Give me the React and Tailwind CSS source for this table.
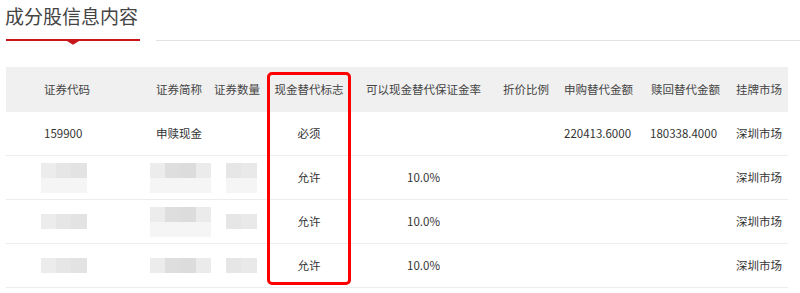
const FONT = { fontFamily: '"Microsoft YaHei", "Noto Sans CJK SC", "Noto Sans", sans-serif' };

const COLS = "grid grid-cols-[144px_58px_60px_82px_147px_61px_87px_85px_58px]";

const HEAD = [
  ["证券代码", "pl-[38px]"],
  ["证券简称", "pl-[6px]"],
  ["证券数量", "pl-[6px]"],
  ["现金替代标志", "justify-center"],
  ["可以现金替代保证金率", "justify-center"],
  ["折价比例", "pl-[6px]"],
  ["申购替代金额", "pl-[6px]"],
  ["赎回替代金额", "pl-[6px]"],
  ["挂牌市场", "pl-[6px]"],
];

// pixelated placeholders where the original was blurred out
function Blur({ cells, bottom = "" }) {
  return (
    <div className="flex flex-col">
      <div className="flex">
        {cells.map((c, i) => (
          <span key={i} className="h-[15px]" style={{ width: c[0], background: c[1] }} />
        ))}
      </div>
      {bottom && (
        <div className="flex">
          {cells.map((c, i) => (
            <span key={i} className="h-[15px]" style={{ width: c[0], background: c[2] || "#f5f5f5" }} />
          ))}
        </div>
      )}
    </div>
  );
}

const blur1 = [[15, "#ececec"], [15, "#e6e6e6"], [16, "#e3e3e3"]];
const blur2 = [[15, "#ececec"], [15, "#dedede"], [16, "#dcdcdc"], [15, "#ebebeb"]];
const blur3 = [[15, "#e6e6e6"], [16, "#e9e9e9"]];

function Row({ children }) {
  return <div className={`${COLS} h-[44px] border-b border-[#ececec] items-center`}>{children}</div>;
}

export default function App() {
  const cell = "flex items-center h-full";
  return (
    <div className="relative w-[800px] h-[293px] bg-white text-[#333] overflow-hidden" style={FONT}>
      <div className="pl-[5px] pt-[4px] text-[19px] leading-[24px] text-[#444]">成分股信息内容</div>
      <div className="flex items-start mt-[11px] pl-[6px]">
        <svg width="134" height="6" viewBox="0 0 134 6" className="block">
          <line x1="0" y1="1" x2="134" y2="1" stroke="#c8161d" strokeWidth="2" />
          <polyline points="61,1 67,4.5 73,1" fill="#c8161d" stroke="#c8161d" strokeWidth="2" />
        </svg>
        <div className="ml-[16px] mt-[1px] h-px flex-1 bg-[#e2e2e2]" />
      </div>

      <div className="ml-[6px] mt-[22px] w-[782px] text-[11.5px]">
        <div className={`${COLS} h-[45px] bg-[#f0f0f0] text-[#444]`}>
          {HEAD.map(([t, c]) => (
            <div key={t} className={`${cell} ${c}`}>{t}</div>
          ))}
        </div>

        <Row>
          <div className={`${cell} pl-[38px]`}>159900</div>
          <div className={`${cell} pl-[6px]`}>申赎现金</div>
          <div />
          <div className={`${cell} justify-center`}>必须</div>
          <div />
          <div />
          <div className={`${cell} pl-[6px]`}>220413.6000</div>
          <div className={`${cell} pl-[5px]`}>180338.4000</div>
          <div className={`${cell} pl-[6px]`}>深圳市场</div>
        </Row>

        {[0, 1, 2].map((i) => (
          <Row key={i}>
            <div className={`${cell} pl-[35px]`}>
              <Blur cells={blur1} bottom={i === 0 ? "y" : ""} />
            </div>
            <div className={`${cell} pl-0`}>
              <Blur cells={blur2} bottom={i < 2 ? "y" : ""} />
            </div>
            <div className={`${cell} pl-[18px]`}>
              <Blur cells={blur3} bottom={i === 0 ? "y" : ""} />
            </div>
            <div className={`${cell} justify-center`}>允许</div>
            <div className={`${cell} justify-center`}>10.0%</div>
            <div />
            <div />
            <div />
            <div className={`${cell} pl-[6px]`}>深圳市场</div>
          </Row>
        ))}
      </div>

      <div className="absolute left-[267px] top-[72px] w-[84px] h-[213px] border-[3px] border-[#ff0000] rounded-[5px]" />
    </div>
  );
}
